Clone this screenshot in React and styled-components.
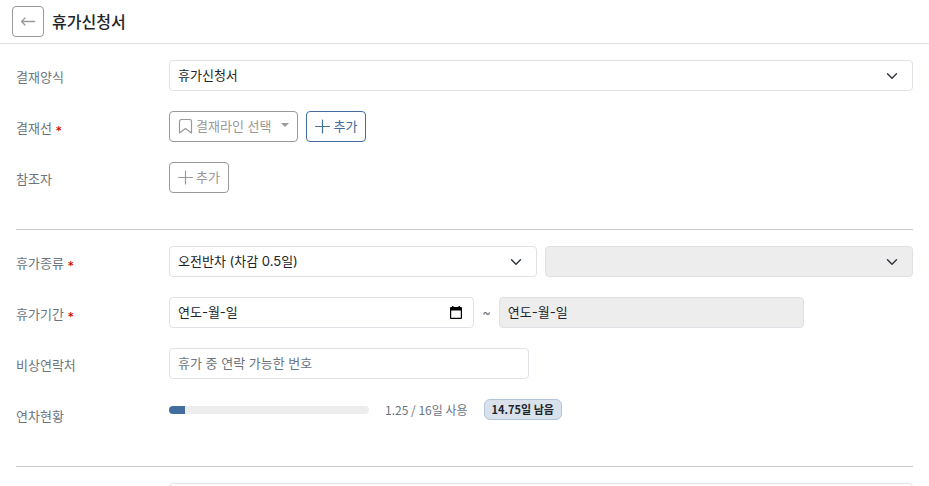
import { useState } from "react";
import styled, { createGlobalStyle, css } from "styled-components";

const App = () => {
    return (
        <>
        <GlobalStyle />
        <Header>
            <BackButton type="button" aria-label="뒤로"><ArrowLeft /></BackButton>
            <Title>휴가신청서</Title>
        </Header>
        <Form>
            <Section>
                <Row>
                    <Label htmlFor="form">결재양식</Label>
                    <Fields>
                        <Select id="form">
                            <option>휴가신청서</option>
                        </Select>
                    </Fields>
                </Row>
                <Row>
                    <LabelText>결재선 <Required>*</Required></LabelText>
                    <Fields>
                        <OutlineButton type="button"><Bookmark />결재라인 선택<Caret /></OutlineButton>
                        <OutlineButton type="button" $primary><Plus />추가</OutlineButton>
                    </Fields>
                </Row>
                <Row>
                    <LabelText>참조자</LabelText>
                    <Fields>
                        <OutlineButton type="button"><Plus />추가</OutlineButton>
                    </Fields>
                </Row>
            </Section>
            <Divider />
            <Section>
                <Row>
                    <Label htmlFor="kind">휴가종류 <Required>*</Required></Label>
                    <Fields>
                        <Select id="kind">
                            <option>오전반차 (차감 0.5일)</option>
                        </Select>
                        <Select disabled aria-label="상세 종류" />
                    </Fields>
                </Row>
                <Row>
                    <Label htmlFor="start">휴가기간 <Required>*</Required></Label>
                    <Period>
                        <DateField id="start" />
                        <Tilde>~</Tilde>
                        <DateField disabled aria-label="종료일" />
                    </Period>
                </Row>
                <Row>
                    <Label htmlFor="phone">비상연락처</Label>
                    <Fields>
                        <PhoneInput id="phone" type="tel" placeholder="휴가 중 연락 가능한 번호" />
                    </Fields>
                </Row>
                <Row>
                    <LabelText>연차현황</LabelText>
                    <Usage>
                        <Track><Bar style={{ width: `${Math.round(1.25 / 16 * 100)}%` }} /></Track>
                        <UsageText>1.25 / 16일 사용</UsageText>
                        <Badge>14.75일 남음</Badge>
                    </Usage>
                </Row>
            </Section>
            <Divider />
            <Section>
                <Row>
                    <span />
                    <Fields>
                        <Input type="text" aria-label="제목" />
                    </Fields>
                </Row>
            </Section>
        </Form>
        </>
    )
}

// Shows the Korean hint until focused, then becomes a native date picker
const DateField = ({ disabled, ...props }) => {
    const [active, setActive] = useState(false);
    return (
        <DateBox>
            <DateInput
                type={active ? "date" : "text"}
                placeholder="연도-월-일"
                disabled={disabled}
                onFocus={() => setActive(true)}
                onBlur={(e) => setActive(e.target.value !== "")}
                {...props}
            />
            {!disabled && !active && <Calendar />}
        </DateBox>
    )
}

const ArrowLeft = () => (
    <svg width="16" height="16" viewBox="0 0 16 16" fill="none" stroke="currentColor" strokeWidth="1.3" strokeLinecap="round" strokeLinejoin="round">
        <path d="M14.5 7.5h-13M5 4 1.5 7.5 5 11" />
    </svg>
)

const Bookmark = () => (
    <svg width="15" height="15" viewBox="0 0 15 15" fill="none" stroke="currentColor" strokeWidth="1.2" strokeLinejoin="round">
        <path d="M1.5 14V2.5a2 2 0 0 1 2-2h8a2 2 0 0 1 2 2V14l-6-4.500z" />
    </svg>
)

const Plus = () => (
    <svg width="15" height="15" viewBox="0 0 15 15" fill="none" stroke="currentColor" strokeWidth="1.2" strokeLinecap="round">
        <path d="M7.5 1v13M.6 7.500h13.800" />
    </svg>
)

const Calendar = () => (
    <CalendarSvg width="12" height="13" viewBox="0 0 12 13">
        <path fill="#000" fillRule="evenodd" d="M2 0h1.5v1h5V0H10v1h1a1 1 0 0 1 1 1v10a1 1 0 0 1-1 1H1a1 1 0 0 1-1-1V2a1 1 0 0 1 1-1h1zM1.2 4.5v7.3h9.6V4.5z" />
    </CalendarSvg>
)

const GlobalStyle = createGlobalStyle`
    *, *::before, *::after {
        box-sizing: border-box;
    }

    body {
        margin: 0;
        background: #fff;
        color: #212529;
    }

    body, button, input, select {
        font-family: Inter, "Noto Sans CJK KR", sans-serif;
        font-size: 13px;
        line-height: 19px;
    }
`

const Header = styled.header`
    display: flex;
    align-items: center;
    gap: 8px;
    padding: 6px 12px;
    border-bottom: 1px solid #dee2e6;
`

const Title = styled.h1`
    margin: 0;
    font-size: 16px;
    line-height: 24px;
    font-weight: 500;
`

const Form = styled.form`
    padding: 16px;
`

const Section = styled.div`
    display: flex;
    flex-direction: column;
    gap: 20px;
`

const Row = styled.div`
    display: grid;
    grid-template-columns: 145px 1fr;
    gap: 8px;
    height: 31px;
`

const labelStyle = css`
    padding-top: 8px;
    color: #6c757d;
`

const Label = styled.label`
    ${labelStyle}
`

const LabelText = styled.span`
    ${labelStyle}
`

const Required = styled.span`
    color: #c00;
    line-height: 1;
    vertical-align: -3px;
`

const Fields = styled.div`
    display: flex;
    gap: 8px;
`

const Period = styled(Fields)`
    max-width: 635px;
    align-items: center;
`

const Usage = styled.div`
    display: flex;
    align-items: flex-start;
    gap: 16px;
`

const buttonStyle = css`
    display: flex;
    align-items: center;
    height: 31px;
    background: #fff;
    border: 1px solid #999;
    border-radius: 4px;
    color: #999;
    cursor: pointer;
`

const BackButton = styled.button`
    ${buttonStyle}
    justify-content: center;
    width: 32px;
    padding: 0;
`

const OutlineButton = styled.button`
    ${buttonStyle}
    gap: 3px;
    padding: 0 8px;

    ${({ $primary }) => $primary && css`
        color: #426d9e;
        border-color: #426d9e;
    `}
`

const Caret = styled.span`
    margin: 0 0 3px 7px;
    border-top: 4px solid;
    border-left: 4px solid transparent;
    border-right: 4px solid transparent;
`

const fieldStyle = css`
    flex: 1;
    width: 100%;
    min-width: 0;
    height: 31px;
    padding: 4px 8px;
    background-color: #fff;
    border: 1px solid #dee2e6;
    border-radius: 4px;
    color: #212529;

    &:disabled {
        background-color: #ededed;
        opacity: 1;
    }
`

const Select = styled.select`
    ${fieldStyle}
    appearance: none;
    padding-right: 36px;
    background-image: url("data:image/svg+xml,%3csvg xmlns='http://www.w3.org/2000/svg' viewBox='0 0 16 16'%3e%3cpath fill='none' stroke='%23343a40' stroke-linecap='round' stroke-linejoin='round' stroke-width='2' d='m2 5 6 6 6-6'/%3e%3c/svg%3e");
    background-repeat: no-repeat;
    background-position: right 14px center;
    background-size: 12px;
`

const Input = styled.input`
    ${fieldStyle}
    padding: 3px 8px 5px;

    &::placeholder {
        color: #6c757d;
        opacity: 1;
    }
`

const PhoneInput = styled(Input)`
    max-width: 360px;
`

const DateBox = styled.div`
    position: relative;
    display: flex;
    flex: 1;
`

const DateInput = styled(Input)`
    &::placeholder {
        color: #212529;
    }
`

const CalendarSvg = styled.svg`
    position: absolute;
    right: 12px;
    top: 9px;
    pointer-events: none;
`

const Tilde = styled.span`
    color: #6c757d;
`

const Track = styled.div`
    width: 200px;
    height: 8px;
    margin-top: 7px;
    overflow: hidden;
    background: #ededed;
    border-radius: 4px;
`

const Bar = styled.div`
    height: 100%;
    background: #426d9e;
`

const UsageText = styled.span`
    padding-top: 2px;
    font-family: "Noto Sans CJK KR", sans-serif;
    font-size: 12px;
    line-height: 18px;
    color: #6c757d;
`

const Badge = styled.span`
    padding: 0 7px;
    background: #d9e2ec;
    border: 1px solid #b3c5d8;
    border-radius: 6px;
    color: #212529;
    font-family: "Noto Sans CJK KR", sans-serif;
    font-size: 11px;
    line-height: 19px;
    font-weight: 700;
`

const Divider = styled.hr`
    height: 1px;
    margin: 36px 0 16px;
    border: 0;
    background: #c8c9ca;
`

export default App
